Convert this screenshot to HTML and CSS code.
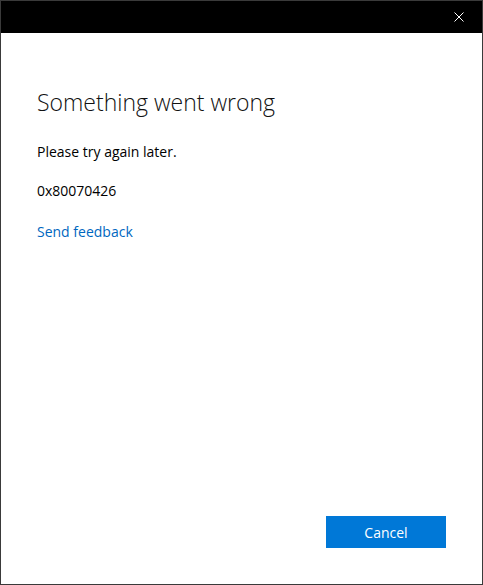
FILE: index.html
```html
<!DOCTYPE html>
<html lang="en">
<head>
    <meta charset="UTF-8">
    <meta name="viewport" content="width=device-width, initial-scale=1.0">
    <title>Something went wrong</title>
    <link rel="stylesheet" href="styles.css">
</head>
<body>

    <div class="window">
        <div class="title-bar">
            <button class="close-btn" aria-label="Close">
                <svg width="10" height="10" viewBox="0 0 10 10">
                    <path d="M0.5 0.5 L9.5 9.5 M9.5 0.5 L0.5 9.5" stroke="#fff" stroke-width="1" fill="none"/>
                </svg>
            </button>
        </div>

        <div class="content">
            <h1 class="heading">Something went wrong</h1>
            <p class="message">Please try again later.</p>
            <p class="message">0x80070426</p>
            <a class="link" href="#">Send feedback</a>
        </div>

        <div class="footer">
            <button class="cancel-btn">Cancel</button>
        </div>
    </div>

</body>
</html>
```

FILE: styles.css
```css
body {
    margin: 0;
    background-color: white;
    font-family: "Open Sans", "Noto Sans", sans-serif;
    color: #000;
}

.window {
    height: 100vh;
    box-sizing: border-box;
    border: 1px solid #3a3a3a;
    display: flex;
    flex-direction: column;
}

.title-bar {
    height: 32px;
    background-color: #000;
    display: flex;
    justify-content: flex-end;
    align-items: center;
}

.close-btn {
    width: 46px;
    height: 32px;
    border: none;
    background: none;
    padding: 0;
    display: flex;
    align-items: center;
    justify-content: center;
}

.close-btn svg {
    display: block;
}

.content {
    flex: 1;
    padding: 53px 36px 0 36px;
}

.heading {
    margin: 0 0 24px 0;
    font-size: 23px;
    font-weight: 300;
    line-height: 32px;
    color: #111;
}

.message {
    margin: 0 0 19px 0;
    font-size: 14px;
    line-height: 20px;
}

.link {
    font-size: 14px;
    line-height: 20px;
    color: #0067c0;
    text-decoration: none;
}

.footer {
    display: flex;
    justify-content: flex-end;
    padding: 0 36px 36px 0;
}

.cancel-btn {
    width: 120px;
    height: 32px;
    border: none;
    background-color: #0078d7;
    color: white;
    font-family: "Open Sans", "Noto Sans", sans-serif;
    font-size: 14px;
    padding: 0;
}
```
